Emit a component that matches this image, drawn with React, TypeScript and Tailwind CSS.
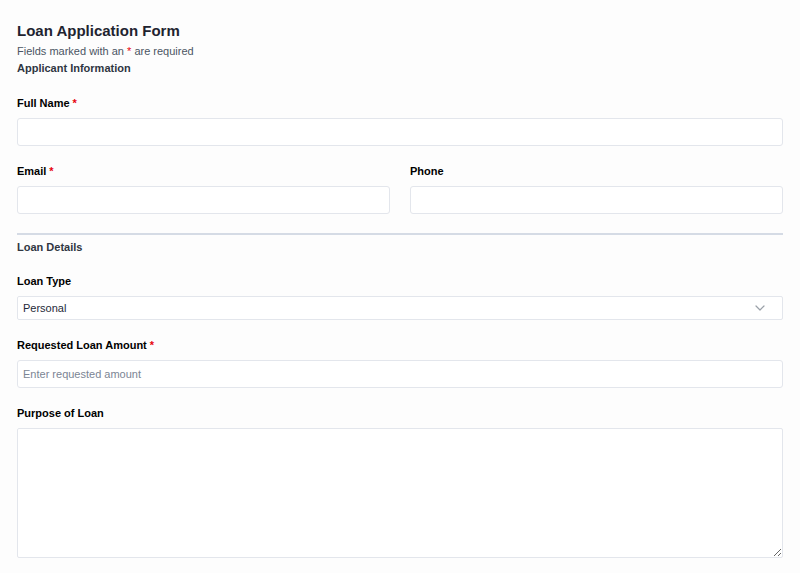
import React, { useState } from 'react';

// Small label with an optional required marker
function FieldLabel({ children, required }: { children: React.ReactNode; required?: boolean }) {
  return (
    <label className="block text-[11px] font-bold text-black leading-[14px] mb-[8px]">
      {children}
      {required && <span className="text-red-600 ml-[3px]">*</span>}
    </label>
  );
}

const inputClass =
  'block w-full h-[28px] px-[5px] text-[11px] text-gray-800 bg-white border border-[#e3e6ec] rounded-[3px] focus:outline-none placeholder:text-[#7b8594]';

export default function App() {
  const [form, setForm] = useState({
    fullName: '',
    email: '',
    phone: '',
    loanType: 'Personal',
    amount: '',
    purpose: '',
  });

  const update = (key: keyof typeof form) => (e: React.ChangeEvent<HTMLInputElement | HTMLSelectElement | HTMLTextAreaElement>) =>
    setForm({ ...form, [key]: e.target.value });

  return (
    <div
      className="min-h-[573px] bg-[#fdfdfd] px-[17px] pt-[21px] pb-4"
      style={{ fontFamily: '"Liberation Sans", Arial, sans-serif' }}
    >
      <h1 className="text-[15px] font-bold text-[#1f2430] leading-[20px]">Loan Application Form</h1>
      <p className="mt-[2px] text-[11px] text-[#4b5563] leading-[16px]">
        Fields marked with an <span className="text-red-600">*</span> are required
      </p>

      <form className="mt-[1px]" onSubmit={(e) => e.preventDefault()}>
        <h2 className="text-[11px] font-bold text-[#2f3642] leading-[16px]">Applicant Information</h2>

        <div className="mt-[20px]">
          <FieldLabel required>Full Name</FieldLabel>
          <input className={inputClass} value={form.fullName} onChange={update('fullName')} />
        </div>

        <div className="mt-[18px] grid grid-cols-2 gap-[20px]">
          <div>
            <FieldLabel required>Email</FieldLabel>
            <input type="email" className={inputClass} value={form.email} onChange={update('email')} />
          </div>
          <div>
            <FieldLabel>Phone</FieldLabel>
            <input type="tel" className={inputClass} value={form.phone} onChange={update('phone')} />
          </div>
        </div>

        <div className="mt-[19px] border-t-2 border-[#d5dbe5]" />

        <h2 className="mt-[4px] text-[11px] font-bold text-[#2f3642] leading-[16px]">Loan Details</h2>

        <div className="mt-[19px]">
          <FieldLabel>Loan Type</FieldLabel>
          <div className="relative">
            <select
              className="block w-full h-[24px] appearance-none px-[5px] text-[11px] text-gray-800 bg-white border border-[#e3e6ec] rounded-[2px] focus:outline-none"
              value={form.loanType}
              onChange={update('loanType')}
            >
              <option>Personal</option>
              <option>Home</option>
              <option>Auto</option>
              <option>Business</option>
            </select>
            <svg
              className="pointer-events-none absolute right-[18px] top-1/2 -translate-y-1/2"
              width="10"
              height="6"
              viewBox="0 0 10 6"
              fill="none"
            >
              <path d="M1 1l4 4 4-4" stroke="#9aa0a8" strokeWidth="1.2" strokeLinecap="round" strokeLinejoin="round" />
            </svg>
          </div>
        </div>

        <div className="mt-[18px]">
          <FieldLabel required>Requested Loan Amount</FieldLabel>
          <input
            className={inputClass}
            placeholder="Enter requested amount"
            value={form.amount}
            onChange={update('amount')}
          />
        </div>

        <div className="mt-[18px]">
          <FieldLabel>Purpose of Loan</FieldLabel>
          <textarea
            className="block w-full h-[130px] px-[5px] py-[4px] text-[11px] text-gray-800 bg-white border border-[#e3e6ec] rounded-[2px] focus:outline-none"
            value={form.purpose}
            onChange={update('purpose')}
          />
        </div>
      </form>
    </div>
  );
}
